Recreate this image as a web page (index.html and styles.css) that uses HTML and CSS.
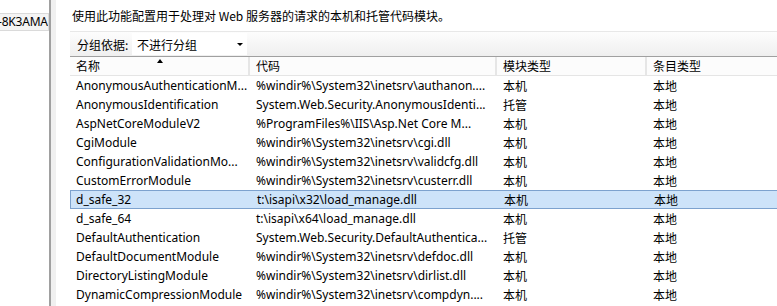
FILE: index.html
```html
<!DOCTYPE html>
<html lang="zh-CN">
<head>
<meta charset="utf-8">
<title>模块</title>
<link rel="stylesheet" href="styles.css">
</head>
<body>
<div class="app">
  <aside class="tree">
    <div class="tree-item">-8K3AMA</div>
  </aside>
  <div class="splitter"></div>
  <main class="main">
    <p class="desc">使用此功能配置用于处理对 Web 服务器的请求的本机和托管代码模块。</p>
    <div class="list">
      <div class="toolbar">
        <span class="group-label">分组依据:</span>
        <div class="combo"><span>不进行分组</span><i class="combo-arrow"></i></div>
      </div>
      <div class="row head">
        <div class="cell c1">名称<i class="sort"></i></div>
        <div class="cell c2">代码</div>
        <div class="cell c3">模块类型</div>
        <div class="cell c4">条目类型</div>
      </div>
      <div class="row"><div class="cell c1">AnonymousAuthenticationM...</div><div class="cell c2">%windir%\System32\inetsrv\authanon....</div><div class="cell c3">本机</div><div class="cell c4">本地</div></div>
      <div class="row"><div class="cell c1">AnonymousIdentification</div><div class="cell c2">System.Web.Security.AnonymousIdenti...</div><div class="cell c3">托管</div><div class="cell c4">本地</div></div>
      <div class="row"><div class="cell c1">AspNetCoreModuleV2</div><div class="cell c2">%ProgramFiles%\IIS\Asp.Net Core M...</div><div class="cell c3">本机</div><div class="cell c4">本地</div></div>
      <div class="row"><div class="cell c1">CgiModule</div><div class="cell c2">%windir%\System32\inetsrv\cgi.dll</div><div class="cell c3">本机</div><div class="cell c4">本地</div></div>
      <div class="row"><div class="cell c1">ConfigurationValidationMo...</div><div class="cell c2">%windir%\System32\inetsrv\validcfg.dll</div><div class="cell c3">本机</div><div class="cell c4">本地</div></div>
      <div class="row"><div class="cell c1">CustomErrorModule</div><div class="cell c2">%windir%\System32\inetsrv\custerr.dll</div><div class="cell c3">本机</div><div class="cell c4">本地</div></div>
      <div class="row selected"><div class="cell c1">d_safe_32</div><div class="cell c2">t:\isapi\x32\load_manage.dll</div><div class="cell c3">本机</div><div class="cell c4">本地</div></div>
      <div class="row"><div class="cell c1">d_safe_64</div><div class="cell c2">t:\isapi\x64\load_manage.dll</div><div class="cell c3">本机</div><div class="cell c4">本地</div></div>
      <div class="row"><div class="cell c1">DefaultAuthentication</div><div class="cell c2">System.Web.Security.DefaultAuthentica...</div><div class="cell c3">托管</div><div class="cell c4">本地</div></div>
      <div class="row"><div class="cell c1">DefaultDocumentModule</div><div class="cell c2">%windir%\System32\inetsrv\defdoc.dll</div><div class="cell c3">本机</div><div class="cell c4">本地</div></div>
      <div class="row"><div class="cell c1">DirectoryListingModule</div><div class="cell c2">%windir%\System32\inetsrv\dirlist.dll</div><div class="cell c3">本机</div><div class="cell c4">本地</div></div>
      <div class="row"><div class="cell c1">DynamicCompressionModule</div><div class="cell c2">%windir%\System32\inetsrv\compdyn....</div><div class="cell c3">本机</div><div class="cell c4">本地</div></div>
    </div>
  </main>
</div>
</body>
</html>
```
FILE: styles.css
```css
* { box-sizing: border-box; }
html, body { margin: 0; padding: 0; background: #fff; }
body {
  width: 777px;
  height: 306px;
  overflow: hidden;
  font-family: "Noto Sans", "Noto Sans CJK SC", sans-serif;
  font-size: 12px;
  color: #000;
}
.app { display: flex; height: 306px; }
.tree { width: 49px; flex: none; overflow: hidden; padding-top: 13px; }
.tree-item {
  height: 18px;
  line-height: 16px;
  margin-left: -2px;
  background: #f4f4f4;
  border: 1px solid #dadada;
  border-left: none;
  white-space: nowrap;
  overflow: hidden;
  font-size: 12px;
  letter-spacing: -0.2px;
}
.splitter {
  width: 7px;
  flex: none;
  background: #f0f0f0;
  border-left: 2px solid #a0a0a0;
}
.main { flex: 1; min-width: 0; overflow: hidden; padding-left: 14px; }
.desc {
  margin: 0;
  padding: 7px 0 0 2px;
  height: 31px;
  line-height: 17px;
  white-space: nowrap;
  font-family: "Noto Sans CJK SC", sans-serif;
}
.list { width: 720px; }
.toolbar {
  height: 26px;
  display: flex;
  align-items: center;
  border-top: 1px solid #e8e8e8;
  border-bottom: 1px solid #a0a0a0;
  background: linear-gradient(#fdfdfd, #efefef);
  padding-left: 7px;
  font-family: "Noto Sans CJK SC", sans-serif;
}
.group-label { width: 55px; }
.combo {
  width: 115px;
  height: 22px;
  background: #fff;
  display: flex;
  align-items: center;
  justify-content: space-between;
  padding: 0 4px 0 5px;
}
.combo-arrow {
  width: 0; height: 0;
  border-left: 3px solid transparent;
  border-right: 3px solid transparent;
  border-top: 3px solid #000;
}
.row { display: flex; height: 19px; line-height: 19px; white-space: nowrap; }
.cell { overflow: hidden; padding-left: 6px; }
.c1 { width: 180px; }
.c2 { width: 247px; }
.c3 { width: 150px; }
.c4 { flex: 1; }
.head {
  background: #fcfcfc;
  border-bottom: 1px solid #e5e5e5;
  font-family: "Noto Sans CJK SC", sans-serif;
  line-height: 18px;
}
.head .cell { position: relative; border-right: 2px solid #e6e6e6; }
.head .c4 { border-right: none; }
.sort {
  position: absolute;
  left: 87px;
  top: 2px;
  width: 0; height: 0;
  border-left: 3.5px solid transparent;
  border-right: 3.5px solid transparent;
  border-bottom: 4px solid #000;
}
.selected {
  background: #cde3f9;
  border: 1px solid #7da2ce;
  line-height: 17px;
}
.selected .c1 { padding-left: 5px; }
.c3, .c4 { font-family: "Noto Sans CJK SC", sans-serif; }
```
